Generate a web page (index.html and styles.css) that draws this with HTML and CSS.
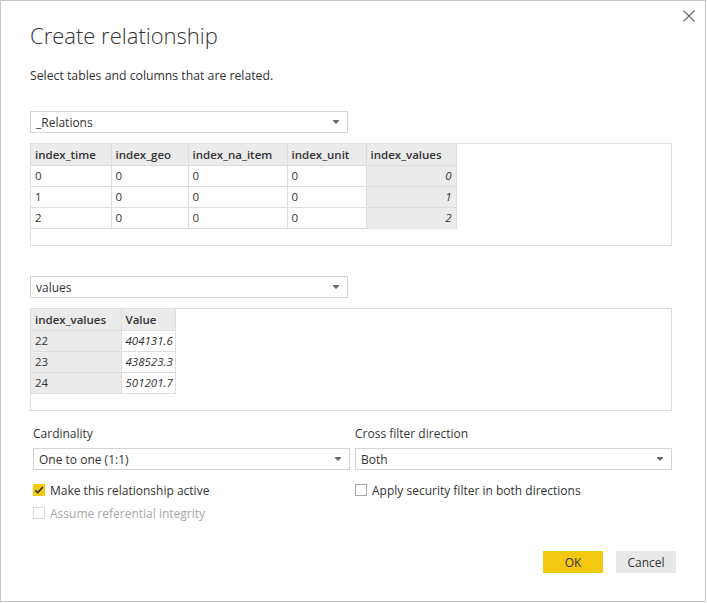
FILE: index.html
```html
<!DOCTYPE html>
<html>
<head>
<meta charset="utf-8">
<link rel="stylesheet" href="styles.css">
</head>
<body>
<div class="dialog">
  <button class="close" aria-label="Close">
    <svg width="12" height="12" viewBox="0 0 12 12"><path d="M0.5 0.5 L11.5 11.5 M11.5 0.5 L0.5 11.5" stroke="#666" stroke-width="1.1" fill="none"/></svg>
  </button>
  <h1 class="title">Create relationship</h1>
  <p class="subtitle">Select tables and columns that are related.</p>

  <div class="select sel-top"><span>_Relations</span><i class="caret"></i></div>
  <div class="grid-box">
    <table class="grid grid-wide">
      <tr>
        <th class="w80">index_time</th><th class="w77">index_geo</th><th class="w99">index_na_item</th><th class="w79">index_unit</th><th class="w90 key">index_values</th>
      </tr>
      <tr><td>0</td><td>0</td><td>0</td><td>0</td><td class="key num">0</td></tr>
      <tr><td>1</td><td>0</td><td>0</td><td>0</td><td class="key num">1</td></tr>
      <tr><td>2</td><td>0</td><td>0</td><td>0</td><td class="key num">2</td></tr>
    </table>
  </div>

  <div class="select sel-second"><span>values</span><i class="caret"></i></div>
  <div class="grid-box">
    <table class="grid grid-narrow">
      <tr><th class="w90 key">index_values</th><th class="w54">Value</th></tr>
      <tr><td class="key">22</td><td class="num">404131.6</td></tr>
      <tr><td class="key">23</td><td class="num">438523.3</td></tr>
      <tr><td class="key">24</td><td class="num">501201.7</td></tr>
    </table>
  </div>

  <div class="options">
    <div class="col">
      <div class="label">Cardinality</div>
      <div class="select"><span>One to one (1:1)</span><i class="caret"></i></div>
      <div class="check first"><span class="box checked"><svg width="10" height="10" viewBox="0 0 10 10"><path d="M1.3 5.2 L3.8 7.7 L8.8 1.9" stroke="#222" stroke-width="1.5" fill="none"/></svg></span><span>Make this relationship active</span></div>
      <div class="check second disabled"><span class="box"></span><span>Assume referential integrity</span></div>
    </div>
    <div class="col">
      <div class="label">Cross filter direction</div>
      <div class="select"><span>Both</span><i class="caret"></i></div>
      <div class="check first"><span class="box"></span><span>Apply security filter in both directions</span></div>
    </div>
  </div>

  <div class="buttons">
    <button class="btn primary">OK</button>
    <button class="btn">Cancel</button>
  </div>
</div>
</body>
</html>
```
FILE: styles.css
```css
html, body {
  margin: 0;
  padding: 0;
  background: #ffffff;
}
body {
  font-family: "Open Sans", "Noto Sans", sans-serif;
  color: #333333;
}
.dialog {
  position: relative;
  width: 706px;
  height: 602px;
  box-sizing: border-box;
  border: 1px solid #c6c6c6;
  padding: 0 33px 0 29px;
  display: flex;
  flex-direction: column;
}
.close {
  position: absolute;
  top: 8px;
  right: 9px;
  width: 14px;
  height: 14px;
  padding: 0;
  border: 0;
  background: none;
  display: flex;
  align-items: center;
  justify-content: center;
}
.title {
  margin: 19px 0 0 0;
  font-size: 22px;
  font-weight: 300;
  line-height: 30px;
  color: #333;
}
.subtitle {
  margin: 17px 0 0 0;
  font-size: 12.25px;
  line-height: 18px;
}
.select {
  height: 22px;
  box-sizing: border-box;
  border: 1px solid #d4d4d4;
  display: flex;
  align-items: center;
  justify-content: space-between;
  padding: 0 8px 0 5px;
  font-size: 12px;
  color: #333;
}
.sel-top, .sel-second {
  width: 318px;
}
.sel-top { margin-top: 26px; }
.sel-second { margin-top: 30px; }
.caret {
  display: block;
  width: 0;
  height: 0;
  border-left: 3px solid transparent;
  border-right: 3px solid transparent;
  border-top: 3px solid #6a6a6a;
  position: relative;
}
.caret::before {
  content: "";
  position: absolute;
  left: -3px;
  top: -4px;
  width: 6px;
  height: 1px;
  background: #6a6a6a;
}
.grid-box {
  margin-top: 10px;
  height: 103px;
  box-sizing: border-box;
  border: 1px solid #dedede;
}
.grid {
  border-collapse: collapse;
  table-layout: fixed;
  font-size: 11.5px;
  color: #333;
}
.grid-wide { width: 425px; }
.grid-narrow { width: 144px; }
.grid th, .grid td {
  height: 21px;
  box-sizing: border-box;
  padding: 0 4px;
  border: 1px solid #dedede;
  text-align: left;
  white-space: nowrap;
  overflow: hidden;
}
.grid tr:first-child th { border-top: 0; }
.grid tr > :first-child { border-left: 0; }
.grid th {
  background: #ebebeb;
  font-weight: 600;
}
.grid td.key { background: #ebebeb; }
.grid td.num {
  text-align: right;
  font-style: italic;
}
.w80 { width: 80px; }
.w77 { width: 77px; }
.w99 { width: 99px; }
.w79 { width: 79px; }
.w90 { width: 90px; }
.w54 { width: 54px; }
.options {
  margin-top: 14px;
  padding-left: 3px;
  display: flex;
  gap: 5px;
}
.col {
  flex: 1;
  display: flex;
  flex-direction: column;
}
.label {
  font-size: 12px;
  line-height: 18px;
  margin-bottom: 5px;
}
.check {
  display: flex;
  align-items: center;
  gap: 5px;
  height: 16px;
  font-size: 12px;
}
.check.first { margin-top: 12px; }
.check.second { margin-top: 7px; }
.box {
  width: 12px;
  height: 12px;
  box-sizing: border-box;
  border: 1px solid #a6a6a6;
  display: flex;
  align-items: center;
  justify-content: center;
}
.box.checked {
  background: #f2c811;
  border-color: #f2c811;
}
.check.disabled { color: #a6a6a6; }
.check.disabled .box { border-color: #dadada; }
.buttons {
  margin-top: 30px;
  display: flex;
  justify-content: flex-end;
  gap: 13px;
  margin-right: -4px;
}
.btn {
  width: 60px;
  height: 22px;
  border: 0;
  padding: 0;
  background: #e8e8e8;
  font-family: "Open Sans", "Noto Sans", sans-serif;
  font-size: 12px;
  color: #333;
}
.btn.primary { background: #f2c811; }
```
